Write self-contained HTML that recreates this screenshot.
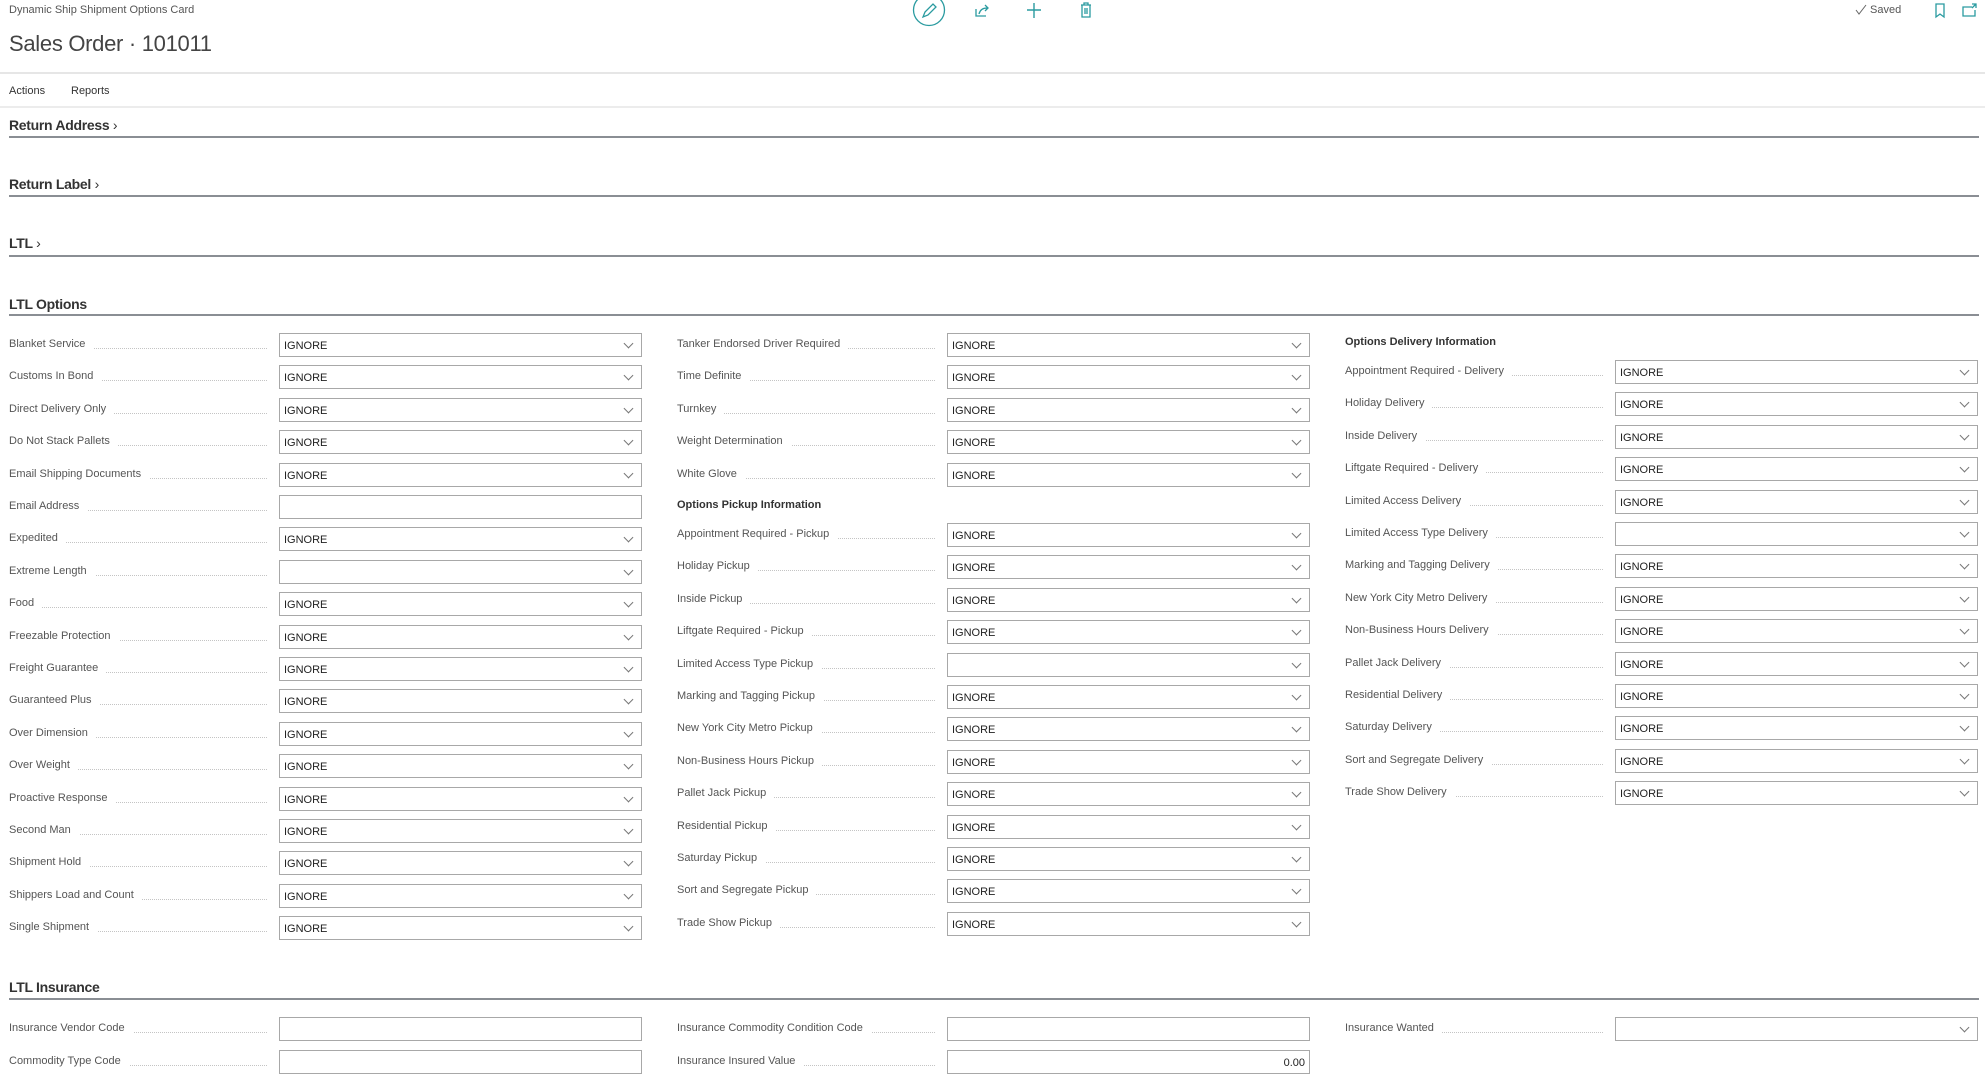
<!DOCTYPE html>
<html><head><meta charset="utf-8"><style>
*{box-sizing:border-box;margin:0;padding:0}
body{width:1985px;height:1080px;background:#fff;font-family:"Liberation Sans",Arial,sans-serif;color:#212121;position:relative;overflow:hidden}
.a{position:absolute}
.sec{position:absolute;left:9px;font-size:14px;font-weight:bold;color:#333;letter-spacing:-0.3px}
.ln{position:absolute;left:9px;width:1970px;height:2px;background:#8a8e94}
.f{position:absolute;width:633px;height:24px;margin-top:1px}
.f .d{position:absolute;left:0;width:258px;top:15px;border-bottom:1px dotted #c4c4c4}
.f .l{position:absolute;left:0;top:5px;font-size:11px;color:#555;background:#fff;padding-right:8px;white-space:nowrap}
.f .b{position:absolute;left:270px;top:0;width:363px;height:24px;border:1px solid #a8a8a8;font-size:11px;padding:6px 4px;color:#212121}
.f .b.s::after{content:"";position:absolute;right:9px;top:6px;width:6px;height:6px;border-right:1px solid #777;border-bottom:1px solid #777;transform:rotate(45deg)}
.h{position:absolute;font-size:11px;font-weight:bold;color:#333}
</style></head><body>
<div class="a" style="left:9px;top:4px;font-size:11px;color:#555">Dynamic Ship Shipment Options Card</div>
<div class="a" style="left:9px;top:31px;font-size:22px;color:#444;letter-spacing:-0.3px">Sales Order · 101011</div>

<svg class="a" style="left:905px;top:0" width="200" height="30" viewBox="905 0 200 30">
<circle cx="929" cy="10" r="15.5" fill="none" stroke="#2a9ba0" stroke-width="1.3"/>
<path d="M923 17 l2 -5 l8 -8 l3 3 l-8 8 z" fill="none" stroke="#2a9ba0" stroke-width="1.3"/>
<path d="M976 9 v7 h10 M979 14 c1 -4 4 -6 8 -6 M985 5 l3 3 l-3 3" fill="none" stroke="#2a9ba0" stroke-width="1.3"/>
<path d="M1034 3 v15 M1027 10 h14" stroke="#2a9ba0" stroke-width="1.4"/>
<path d="M1081 5 h10 M1084 5 v-2 h4 v2 M1082 5 v12 h8 v-12 M1085 8 v6 M1087 8 v6" fill="none" stroke="#2a9ba0" stroke-width="1.3"/>
</svg>
<svg class="a" style="left:1850px;top:0" width="135" height="22">
<path d="M6 10 l3 4 l7 -9" fill="none" stroke="#666" stroke-width="1"/>
<path d="M86 4 h8 v13 l-4 -3 l-4 3 z" fill="none" stroke="#2a9ba0" stroke-width="1.3"/>
<path d="M122 7 h-9 v9 h12 v-6 M122 4 h4 v4 M126 4 l-4 4" fill="none" stroke="#2a9ba0" stroke-width="1.3"/>
</svg>
<div class="a" style="left:1870px;top:4px;font-size:11px;color:#555">Saved</div>

<div class="a" style="left:0;top:72px;width:1985px;height:2px;background:#e6e6e6"></div>
<div class="a" style="left:9px;top:85px;font-size:11px;color:#333">Actions</div>
<div class="a" style="left:71px;top:85px;font-size:11px;color:#333">Reports</div>
<div class="a" style="left:0;top:106px;width:1985px;height:2px;background:#ececec"></div>

<div class="sec" style="top:117px">Return Address <span style="font-weight:normal">›</span></div><div class="ln" style="top:136px"></div>
<div class="sec" style="top:176px">Return Label <span style="font-weight:normal">›</span></div><div class="ln" style="top:195px"></div>
<div class="sec" style="top:235px">LTL <span style="font-weight:normal">›</span></div><div class="ln" style="top:255px"></div>
<div class="sec" style="top:296px">LTL Options</div><div class="ln" style="top:314px"></div>

<div class="f" style="left:9px;top:332px"><div class="d"></div><span class="l">Blanket Service</span><div class="b s">IGNORE</div></div>
<div class="f" style="left:9px;top:364px"><div class="d"></div><span class="l">Customs In Bond</span><div class="b s">IGNORE</div></div>
<div class="f" style="left:9px;top:397px"><div class="d"></div><span class="l">Direct Delivery Only</span><div class="b s">IGNORE</div></div>
<div class="f" style="left:9px;top:429px"><div class="d"></div><span class="l">Do Not Stack Pallets</span><div class="b s">IGNORE</div></div>
<div class="f" style="left:9px;top:462px"><div class="d"></div><span class="l">Email Shipping Documents</span><div class="b s">IGNORE</div></div>
<div class="f" style="left:9px;top:494px"><div class="d"></div><span class="l">Email Address</span><div class="b"></div></div>
<div class="f" style="left:9px;top:526px"><div class="d"></div><span class="l">Expedited</span><div class="b s">IGNORE</div></div>
<div class="f" style="left:9px;top:559px"><div class="d"></div><span class="l">Extreme Length</span><div class="b s"></div></div>
<div class="f" style="left:9px;top:591px"><div class="d"></div><span class="l">Food</span><div class="b s">IGNORE</div></div>
<div class="f" style="left:9px;top:624px"><div class="d"></div><span class="l">Freezable Protection</span><div class="b s">IGNORE</div></div>
<div class="f" style="left:9px;top:656px"><div class="d"></div><span class="l">Freight Guarantee</span><div class="b s">IGNORE</div></div>
<div class="f" style="left:9px;top:688px"><div class="d"></div><span class="l">Guaranteed Plus</span><div class="b s">IGNORE</div></div>
<div class="f" style="left:9px;top:721px"><div class="d"></div><span class="l">Over Dimension</span><div class="b s">IGNORE</div></div>
<div class="f" style="left:9px;top:753px"><div class="d"></div><span class="l">Over Weight</span><div class="b s">IGNORE</div></div>
<div class="f" style="left:9px;top:786px"><div class="d"></div><span class="l">Proactive Response</span><div class="b s">IGNORE</div></div>
<div class="f" style="left:9px;top:818px"><div class="d"></div><span class="l">Second Man</span><div class="b s">IGNORE</div></div>
<div class="f" style="left:9px;top:850px"><div class="d"></div><span class="l">Shipment Hold</span><div class="b s">IGNORE</div></div>
<div class="f" style="left:9px;top:883px"><div class="d"></div><span class="l">Shippers Load and Count</span><div class="b s">IGNORE</div></div>
<div class="f" style="left:9px;top:915px"><div class="d"></div><span class="l">Single Shipment</span><div class="b s">IGNORE</div></div>

<div class="f" style="left:677px;top:332px"><div class="d"></div><span class="l">Tanker Endorsed Driver Required</span><div class="b s">IGNORE</div></div>
<div class="f" style="left:677px;top:364px"><div class="d"></div><span class="l">Time Definite</span><div class="b s">IGNORE</div></div>
<div class="f" style="left:677px;top:397px"><div class="d"></div><span class="l">Turnkey</span><div class="b s">IGNORE</div></div>
<div class="f" style="left:677px;top:429px"><div class="d"></div><span class="l">Weight Determination</span><div class="b s">IGNORE</div></div>
<div class="f" style="left:677px;top:462px"><div class="d"></div><span class="l">White Glove</span><div class="b s">IGNORE</div></div>
<div class="h" style="left:677px;top:499px">Options Pickup Information</div>
<div class="f" style="left:677px;top:522px"><div class="d"></div><span class="l">Appointment Required - Pickup</span><div class="b s">IGNORE</div></div>
<div class="f" style="left:677px;top:554px"><div class="d"></div><span class="l">Holiday Pickup</span><div class="b s">IGNORE</div></div>
<div class="f" style="left:677px;top:587px"><div class="d"></div><span class="l">Inside Pickup</span><div class="b s">IGNORE</div></div>
<div class="f" style="left:677px;top:619px"><div class="d"></div><span class="l">Liftgate Required - Pickup</span><div class="b s">IGNORE</div></div>
<div class="f" style="left:677px;top:652px"><div class="d"></div><span class="l">Limited Access Type Pickup</span><div class="b s"></div></div>
<div class="f" style="left:677px;top:684px"><div class="d"></div><span class="l">Marking and Tagging Pickup</span><div class="b s">IGNORE</div></div>
<div class="f" style="left:677px;top:716px"><div class="d"></div><span class="l">New York City Metro Pickup</span><div class="b s">IGNORE</div></div>
<div class="f" style="left:677px;top:749px"><div class="d"></div><span class="l">Non-Business Hours Pickup</span><div class="b s">IGNORE</div></div>
<div class="f" style="left:677px;top:781px"><div class="d"></div><span class="l">Pallet Jack Pickup</span><div class="b s">IGNORE</div></div>
<div class="f" style="left:677px;top:814px"><div class="d"></div><span class="l">Residential Pickup</span><div class="b s">IGNORE</div></div>
<div class="f" style="left:677px;top:846px"><div class="d"></div><span class="l">Saturday Pickup</span><div class="b s">IGNORE</div></div>
<div class="f" style="left:677px;top:878px"><div class="d"></div><span class="l">Sort and Segregate Pickup</span><div class="b s">IGNORE</div></div>
<div class="f" style="left:677px;top:911px"><div class="d"></div><span class="l">Trade Show Pickup</span><div class="b s">IGNORE</div></div>

<div class="h" style="left:1345px;top:336px">Options Delivery Information</div>
<div class="f" style="left:1345px;top:359px"><div class="d"></div><span class="l">Appointment Required - Delivery</span><div class="b s">IGNORE</div></div>
<div class="f" style="left:1345px;top:391px"><div class="d"></div><span class="l">Holiday Delivery</span><div class="b s">IGNORE</div></div>
<div class="f" style="left:1345px;top:424px"><div class="d"></div><span class="l">Inside Delivery</span><div class="b s">IGNORE</div></div>
<div class="f" style="left:1345px;top:456px"><div class="d"></div><span class="l">Liftgate Required - Delivery</span><div class="b s">IGNORE</div></div>
<div class="f" style="left:1345px;top:489px"><div class="d"></div><span class="l">Limited Access Delivery</span><div class="b s">IGNORE</div></div>
<div class="f" style="left:1345px;top:521px"><div class="d"></div><span class="l">Limited Access Type Delivery</span><div class="b s"></div></div>
<div class="f" style="left:1345px;top:553px"><div class="d"></div><span class="l">Marking and Tagging Delivery</span><div class="b s">IGNORE</div></div>
<div class="f" style="left:1345px;top:586px"><div class="d"></div><span class="l">New York City Metro Delivery</span><div class="b s">IGNORE</div></div>
<div class="f" style="left:1345px;top:618px"><div class="d"></div><span class="l">Non-Business Hours Delivery</span><div class="b s">IGNORE</div></div>
<div class="f" style="left:1345px;top:651px"><div class="d"></div><span class="l">Pallet Jack Delivery</span><div class="b s">IGNORE</div></div>
<div class="f" style="left:1345px;top:683px"><div class="d"></div><span class="l">Residential Delivery</span><div class="b s">IGNORE</div></div>
<div class="f" style="left:1345px;top:715px"><div class="d"></div><span class="l">Saturday Delivery</span><div class="b s">IGNORE</div></div>
<div class="f" style="left:1345px;top:748px"><div class="d"></div><span class="l">Sort and Segregate Delivery</span><div class="b s">IGNORE</div></div>
<div class="f" style="left:1345px;top:780px"><div class="d"></div><span class="l">Trade Show Delivery</span><div class="b s">IGNORE</div></div>

<div class="sec" style="top:979px">LTL Insurance</div><div class="ln" style="top:998px"></div>
<div class="f" style="left:9px;top:1016px"><div class="d"></div><span class="l">Insurance Vendor Code</span><div class="b"></div></div>
<div class="f" style="left:9px;top:1049px"><div class="d"></div><span class="l">Commodity Type Code</span><div class="b"></div></div>
<div class="f" style="left:677px;top:1016px"><div class="d"></div><span class="l">Insurance Commodity Condition Code</span><div class="b"></div></div>
<div class="f" style="left:677px;top:1049px"><div class="d"></div><span class="l">Insurance Insured Value</span><div class="b" style="text-align:right">0.00</div></div>
<div class="f" style="left:1345px;top:1016px"><div class="d"></div><span class="l">Insurance Wanted</span><div class="b s"></div></div>
</body></html>
